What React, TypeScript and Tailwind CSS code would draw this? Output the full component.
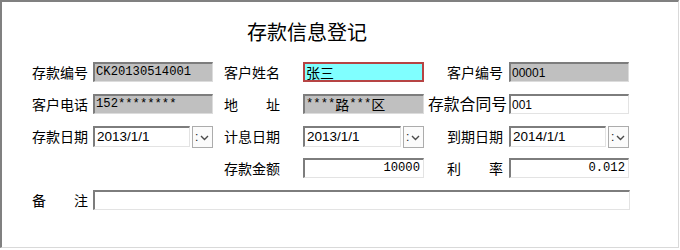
import type { ReactNode } from 'react';

const cjk = "font-['Noto_Sans_CJK_SC',sans-serif]";
const mono = "font-['Liberation_Mono','Noto_Sans_CJK_SC',monospace] text-[12.2px]";
const sans = "font-['Liberation_Sans','Noto_Sans_CJK_SC',sans-serif]";

// sunken text box, like an old WinForms TextBox
function Box({
  w,
  kind = 'white',
  right = false,
  children,
}: {
  w: string;
  kind?: 'white' | 'gray' | 'focus';
  right?: boolean;
  children?: ReactNode;
}) {
  const skin =
    kind === 'focus'
      ? 'border-2 border-[#b64444] bg-[#80ffff]'
      : kind === 'gray'
        ? 'border-t-2 border-l-2 border-t-[#7d7d7d] border-l-[#7d7d7d] border-r border-b border-r-[#dcdcdc] border-b-[#dcdcdc] bg-[#c0c0c0]'
        : 'border-t-2 border-l-2 border-t-[#7d7d7d] border-l-[#7d7d7d] border-r border-b border-r-[#e3e3e3] border-b-[#e3e3e3] bg-white';
  return (
    <div
      className={`${w} ${skin} h-[20px] flex items-center overflow-hidden whitespace-nowrap text-black ${
        right ? 'justify-end pr-[3px]' : 'pl-[1px]'
      }`}
    >
      {children}
    </div>
  );
}

function DatePicker({ w, value }: { w: string; value: string }) {
  return (
    <div className={`${w} flex items-start justify-between`}>
      <div className="flex-1 h-[21px] border-t-2 border-l-2 border-t-[#7d7d7d] border-l-[#7d7d7d] border-r border-b border-r-[#e3e3e3] border-b-[#e3e3e3] bg-white flex items-center pl-[2px] overflow-hidden">
        <span className={`${sans} text-[13.5px] text-black`}>{value}</span>
      </div>
      <div className="ml-[2px] w-[21px] h-[22px] border border-[#acacac] bg-[#fbfbfb] flex items-center pl-[2px] gap-[2px]">
        <span className={`${sans} text-[12px] leading-none text-[#222]`}>:</span>
        <svg width="9" height="6" viewBox="0 0 9 6" className="mt-[1px]">
          <path d="M1 1 L4.5 4.5 L8 1" fill="none" stroke="#4a4a4a" strokeWidth="1.4" />
        </svg>
      </div>
    </div>
  );
}

function Label({ text, className = '' }: { text: string; className?: string }) {
  return (
    <div className={`${cjk} text-[14px] leading-[20px] text-black whitespace-nowrap ${className}`}>{text}</div>
  );
}

// label whose characters are spread over a fixed width (地    址)
function Spread({ chars, className }: { chars: string[]; className: string }) {
  return (
    <div className={`${cjk} text-[14px] leading-[20px] text-black flex justify-between ${className}`}>
      {chars.map((c, i) => (
        <span key={i}>{c}</span>
      ))}
    </div>
  );
}

export default function App() {
  return (
    <div className="w-[679px] h-[248px] bg-white border-t-2 border-l-2 border-t-[#808080] border-l-[#808080] border-r border-b border-r-[#d9d9d9] border-b-[#d9d9d9] pl-[30px] pt-[18px]">
      <div className={`${cjk} text-[20px] leading-[24px] text-black ml-[215px]`}>存款信息登记</div>

      <div className="mt-[18px] flex flex-col gap-[12px]">
        {/* row 1 */}
        <div className="flex items-center h-[20px]">
          <Label text="存款编号" className="w-[56px]" />
          <div className="ml-[5px]">
            <Box w="w-[120px]" kind="gray">
              <span className={mono}>CK20130514001</span>
            </Box>
          </div>
          <Label text="客户姓名" className="ml-[11px] w-[56px]" />
          <div className="ml-[23px]">
            <Box w="w-[121px]" kind="focus">
              <span className={`${cjk} text-[14px]`}>张三</span>
            </Box>
          </div>
          <Label text="客户编号" className="ml-[23px] w-[56px]" />
          <div className="ml-[6px]">
            <Box w="w-[120px]" kind="gray">
              <span className={`${sans} text-[12px]`}>00001</span>
            </Box>
          </div>
        </div>

        {/* row 2 */}
        <div className="flex items-center h-[20px]">
          <Label text="客户电话" className="w-[56px]" />
          <div className="ml-[5px]">
            <Box w="w-[120px]" kind="gray">
              <span className={mono}>152********</span>
            </Box>
          </div>
          <Spread chars={['地', '址']} className="ml-[11px] w-[56px]" />
          <div className="ml-[23px]">
            <Box w="w-[121px]" kind="gray">
              <span className={mono}>****</span>
              <span className={`${cjk} text-[14px]`}>路</span>
              <span className={mono}>***</span>
              <span className={`${cjk} text-[14px]`}>区</span>
            </Box>
          </div>
          <div className={`${cjk} ml-[4px] w-[79px] text-[15.8px] leading-[20px] text-black whitespace-nowrap`}>存款合同号</div>
          <div className="ml-[2px]">
            <Box w="w-[120px]">
              <span className={`${sans} text-[12px]`}>001</span>
            </Box>
          </div>
        </div>

        {/* row 3 */}
        <div className="flex items-start h-[20px]">
          <Label text="存款日期" className="w-[56px]" />
          <DatePicker w="ml-[5px] w-[120px]" value="2013/1/1" />
          <Label text="计息日期" className="ml-[11px] w-[56px]" />
          <DatePicker w="ml-[23px] w-[121px]" value="2013/1/1" />
          <Label text="到期日期" className="ml-[23px] w-[56px]" />
          <DatePicker w="ml-[6px] w-[120px]" value="2014/1/1" />
        </div>

        {/* row 4 */}
        <div className="flex items-center h-[20px]">
          <Label text="存款金额" className="ml-[192px] w-[56px]" />
          <div className="ml-[23px]">
            <Box w="w-[121px]" right>
              <span className={mono}>10000</span>
            </Box>
          </div>
          <Spread chars={['利', '率']} className="ml-[23px] w-[56px]" />
          <div className="ml-[6px]">
            <Box w="w-[120px]" right>
              <span className={mono}>0.012</span>
            </Box>
          </div>
        </div>

        {/* row 5 */}
        <div className="flex items-center h-[20px]">
          <Spread chars={['备', '注']} className="w-[56px]" />
          <div className="ml-[5px]">
            <Box w="w-[537px]" />
          </div>
        </div>
      </div>
    </div>
  );
}
